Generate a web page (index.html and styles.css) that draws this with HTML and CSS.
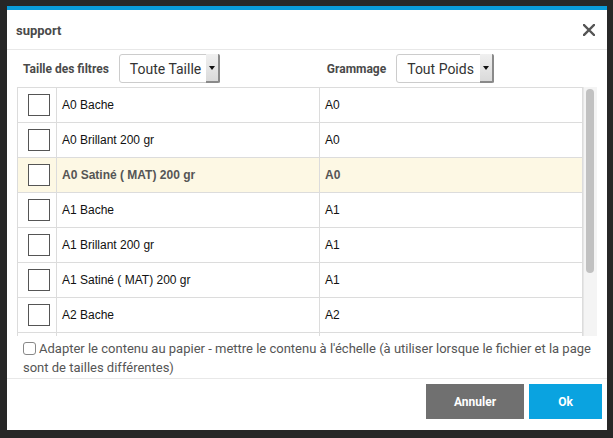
FILE: index.html
```html
<!DOCTYPE html>
<html lang="fr">
<head>
<meta charset="utf-8">
<title>support</title>
<link rel="stylesheet" href="styles.css">
</head>
<body>
<div class="dialog">
  <div class="header">
    <span class="title">support</span>
    <svg class="close" width="12" height="12" viewBox="0 0 12 12"><path d="M1 1L11 11M11 1L1 11" stroke="#555" stroke-width="2.4" stroke-linecap="square"/></svg>
  </div>
  <div class="filters">
    <div class="filter">
      <span class="flabel">Taille des filtres</span>
      <div class="select sel1"><span class="sval">Toute Taille</span><span class="sarrow"><i></i></span></div>
    </div>
    <div class="filter f2">
      <span class="flabel">Grammage</span>
      <div class="select sel2"><span class="sval">Tout Poids</span><span class="sarrow"><i></i></span></div>
    </div>
  </div>
  <div class="tablewrap">
    <div class="tablebox">
      <table class="grid">
        <tr><td class="cb"><span class="box"></span></td><td class="name">A0 Bache</td><td class="code">A0</td></tr>
        <tr><td class="cb"><span class="box"></span></td><td class="name">A0 Brillant 200 gr</td><td class="code">A0</td></tr>
        <tr class="hl"><td class="cb"><span class="box"></span></td><td class="name">A0 Satiné ( MAT) 200 gr</td><td class="code">A0</td></tr>
        <tr><td class="cb"><span class="box"></span></td><td class="name">A1 Bache</td><td class="code">A1</td></tr>
        <tr><td class="cb"><span class="box"></span></td><td class="name">A1 Brillant 200 gr</td><td class="code">A1</td></tr>
        <tr><td class="cb"><span class="box"></span></td><td class="name">A1 Satiné ( MAT) 200 gr</td><td class="code">A1</td></tr>
        <tr><td class="cb"><span class="box"></span></td><td class="name">A2 Bache</td><td class="code">A2</td></tr>
        <tr><td class="cb"></td><td class="name"></td><td class="code"></td></tr>
      </table>
    </div>
    <div class="scrollbar"><div class="thumb"></div></div>
  </div>
  <div class="fit">
    <span class="smallcb"></span>Adapter le contenu au papier - mettre le contenu à l'échelle (à utiliser lorsque le fichier et la page sont de tailles différentes)
  </div>
  <div class="footer">
    <button class="btn cancel">Annuler</button>
    <button class="btn ok">Ok</button>
  </div>
</div>
</body>
</html>
```
FILE: styles.css
```css
html, body {
  margin: 0;
  padding: 0;
  background: #272727;
  width: 613px;
  height: 438px;
  overflow: hidden;
  font-family: Roboto, "Liberation Sans", sans-serif;
}
.dialog {
  margin: 6px 0 0 7px;
  width: 600px;
  height: 420px;
  background: #fff;
  border-top: 4px solid #0a9bd9;
  display: flex;
  flex-direction: column;
}
.header {
  height: 40px;
  box-sizing: border-box;
  border-bottom: 1px solid #e8e8e8;
  display: flex;
  align-items: center;
  justify-content: space-between;
  padding: 0 12px 0 9px;
  flex-shrink: 0;
}
.title {
  font-weight: 700;
  font-size: 13px;
  color: #4a4a4a;
  margin-top: 2px;
}
.close { display: block; margin-top: 1px; }
.filters {
  display: flex;
  align-items: center;
  padding: 4px 0 0 16px;
  height: 29px;
  flex-shrink: 0;
}
.filter { display: flex; align-items: center; }
.f2 { margin-left: 107px; }
.flabel {
  font-weight: 700;
  font-size: 12px;
  color: #4a4a4a;
  margin-right: 10px;
}
.select {
  height: 29px;
  box-sizing: border-box;
  border: 1px solid #ccc;
  border-radius: 3px;
  display: flex;
  align-items: stretch;
  background: #fff;
}
.sel1 { width: 101px; }
.sel2 { width: 98px; }
.sval {
  flex: 1;
  font-size: 14px;
  color: #333;
  padding-left: 10px;
  display: flex;
  align-items: center;
}
.sarrow {
  width: 12px;
  background: linear-gradient(#f0f0f0, #dadada);
  border-right: 2px solid #8a8a8a;
  border-bottom: 2px solid #8a8a8a;
  border-radius: 0 2px 2px 0;
  margin: -1px -1px -1px 0;
  display: flex;
  align-items: center;
  justify-content: center;
}
.sarrow i {
  width: 0; height: 0;
  border-left: 3px solid transparent;
  border-right: 3px solid transparent;
  border-top: 4px solid #111;
}
.tablewrap {
  margin: 4px 0 0 10px;
  height: 249px;
  display: flex;
  flex-shrink: 0;
}
.tablebox {
  width: 566px;
  height: 249px;
  overflow: hidden;
}
.grid {
  border-collapse: collapse;
  width: 566px;
  table-layout: fixed;
  font-family: "Liberation Sans", Arial, sans-serif;
  font-size: 12px;
  color: #111;
}
.grid td {
  border: 1px solid #dcdcdc;
  height: 35px;
  padding: 0 5px;
  box-sizing: border-box;
  vertical-align: middle;
}
.grid td.cb { width: 39px; padding: 0; text-align: center; }
.grid td.name { width: 263px; }
.grid tr.hl td { background: #fdf8e4; font-weight: 700; color: #555; }
.box {
  display: block;
  width: 20px;
  height: 20px;
  border: 1px solid #555;
  margin: 0 0 0 10px;
  background: #fff;
}
.scrollbar {
  width: 14px;
  height: 249px;
  background: #f4f4f4;
  border-left: 1px solid #e6e6e6;
  box-sizing: border-box;
  padding: 2px 0 0 2px;
}
.thumb {
  width: 8px;
  height: 184px;
  background: #c1c1c1;
  border-radius: 4px;
}
.fit {
  padding: 3px 4px 0 16px;
  font-size: 13px;
  line-height: 19px;
  color: #555;
  height: 42px;
  flex-shrink: 0;
  box-sizing: border-box;
}
.smallcb {
  display: inline-block;
  width: 11px;
  height: 11px;
  border: 1px solid #888;
  border-radius: 3px;
  vertical-align: -2px;
  margin-right: 3px;
}
.footer {
  border-top: 1px solid #e8e8e8;
  display: flex;
  justify-content: flex-end;
  gap: 5px;
  padding: 5px 5px 0 0;
  flex: 1;
}
.btn {
  height: 35px;
  border: 0;
  color: #fff;
  font-family: Roboto, sans-serif;
  font-weight: 700;
  font-size: 12px;
  padding: 0;
}
.cancel { width: 98px; background: #707070; }
.ok { width: 73px; background: #0aa3e0; }
```
